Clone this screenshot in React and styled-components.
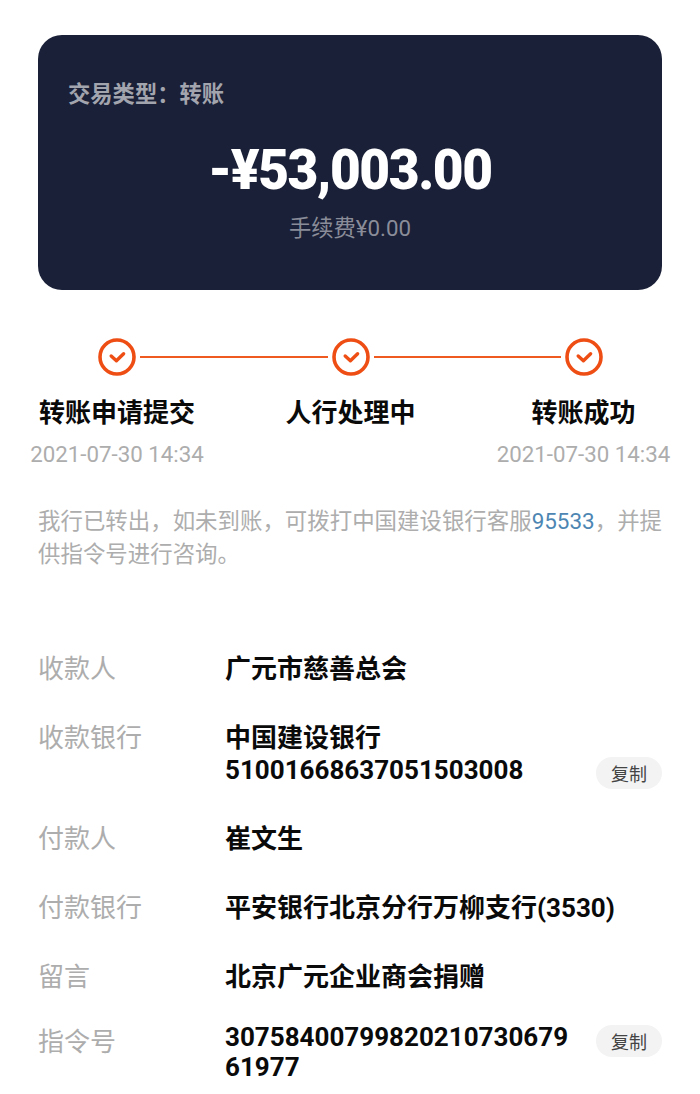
import React from "react";
import styled, { createGlobalStyle } from "styled-components";

const GlobalStyle = createGlobalStyle`
  html, body {
    margin: 0;
    padding: 0;
    background: #ffffff;
  }
  * {
    box-sizing: border-box;
  }
`;

const steps = [
  { title: "转账申请提交", time: "2021-07-30 14:34" },
  { title: "人行处理中", time: "" },
  { title: "转账成功", time: "2021-07-30 14:34" },
];

const CheckCircle = () => (
  <svg width="38" height="38" viewBox="0 0 38 38" fill="none">
    <circle cx="19" cy="19" r="17" stroke="#ee4d14" strokeWidth="3.6" />
    <path
      d="M13.2 18 L18.4 22.8 L25.6 15.8"
      stroke="#ee4d14"
      strokeWidth="3.4"
      strokeLinecap="round"
      strokeLinejoin="round"
    />
  </svg>
);

const App = () => {
  return (
    <Page>
      <GlobalStyle />
      <AmountCard>
        <TradeType>交易类型：转账</TradeType>
        <Amount>-¥53,003.00</Amount>
        <Fee>手续费¥0.00</Fee>
      </AmountCard>

      <Stepper>
        {steps.map((step, i) => (
          <Step key={step.title}>
            <IconRow>
              <Line $hidden={i === 0} />
              <CheckCircle />
              <Line $hidden={i === steps.length - 1} />
            </IconRow>
            <StepTitle>{step.title}</StepTitle>
            <StepTime>{step.time}</StepTime>
          </Step>
        ))}
      </Stepper>

      <Note>
        我行已转出，如未到账，可拨打中国建设银行客服<Phone>95533</Phone>，并提供指令号进行咨询。
      </Note>

      <Details>
        <Row>
          <Label>收款人</Label>
          <Value>广元市慈善总会</Value>
        </Row>
        <Row>
          <Label>收款银行</Label>
          <Value>
            中国建设银行
            <br />
            51001668637051503008
          </Value>
          <CopyButton $top={35}>复制</CopyButton>
        </Row>
        <Row>
          <Label>付款人</Label>
          <Value>崔文生</Value>
        </Row>
        <Row>
          <Label>付款银行</Label>
          <Value>平安银行北京分行万柳支行(3530)</Value>
        </Row>
        <Row>
          <Label>留言</Label>
          <Value>北京广元企业商会捐赠</Value>
        </Row>
        <Row $tight>
          <Label $top={4}>指令号</Label>
          <Value $tight>
            30758400799820210730679
            <br />
            61977
          </Value>
          <CopyButton $top={3}>复制</CopyButton>
        </Row>
      </Details>
    </Page>
  );
};

const fontStack = `Roboto, "Noto Sans CJK SC", sans-serif`;

const Page = styled.div`
  width: 700px;
  height: 1094px;
  overflow: hidden;
  background: #ffffff;
  padding-top: 35px;
  font-family: ${fontStack};
`;

const AmountCard = styled.div`
  width: 624px;
  height: 255px;
  margin: 0 38px;
  padding: 43px 30px 0;
  background: #1a2037;
  border-radius: 24px;
`;

const TradeType = styled.div`
  font-size: 22.3px;
  line-height: 32px;
  font-weight: 700;
  color: #a3a5ae;
`;

const Amount = styled.div`
  margin-top: 28px;
  font-size: 56px;
  line-height: 64px;
  font-weight: 900;
  letter-spacing: -1.5px;
  color: #ffffff;
  text-align: center;
  transform: scaleX(0.95);
`;

const Fee = styled.div`
  margin-top: 11px;
  font-size: 22.3px;
  line-height: 30px;
  color: #8a8d99;
  text-align: center;
`;

const Stepper = styled.div`
  display: grid;
  grid-template-columns: 234px 233px 233px;
  margin-top: 48px;
`;

const Step = styled.div`
  display: flex;
  flex-direction: column;
  align-items: center;
`;

const IconRow = styled.div`
  display: flex;
  align-items: center;
  width: 100%;
  height: 38px;
  gap: 4px;
`;

const Line = styled.div`
  flex: 1;
  height: 2px;
  background: ${(p) => (p.$hidden ? "transparent" : "#ee5a1f")};
`;

const StepTitle = styled.div`
  margin-top: 20px;
  font-size: 26px;
  line-height: 34px;
  font-weight: 700;
  color: #0a0a0a;
`;

const StepTime = styled.div`
  margin-top: 9px;
  height: 30px;
  font-size: 22.3px;
  line-height: 30px;
  color: #adadad;
`;

const Note = styled.div`
  margin: 36px 36px 0 38px;
  font-size: 22.45px;
  line-height: 33px;
  color: #adadad;
`;

const Phone = styled.span`
  color: #4d86b3;
`;

const Details = styled.div`
  display: flex;
  flex-direction: column;
  gap: 37px;
  margin-top: 82px;
  padding: 0 38px;
`;

const Row = styled.div`
  display: flex;
  align-items: flex-start;
  margin-top: ${(p) => (p.$tight ? "-8px" : "0")};
`;

const Label = styled.div`
  flex: 0 0 187px;
  margin-top: ${(p) => p.$top || 0}px;
  font-size: 26px;
  line-height: 32px;
  color: #adadad;
`;

const Value = styled.div`
  flex: 1;
  font-size: 26px;
  line-height: ${(p) => (p.$tight ? "30px" : "32px")};
  font-weight: 700;
  color: #0a0a0a;
`;

const CopyButton = styled.div`
  display: flex;
  align-items: center;
  justify-content: center;
  flex: 0 0 66px;
  height: 32px;
  margin-top: ${(p) => p.$top}px;
  margin-bottom: -32px;
  border-radius: 16px;
  background: #f3f3f3;
  font-size: 18px;
  color: #444444;
`;

export default App;
